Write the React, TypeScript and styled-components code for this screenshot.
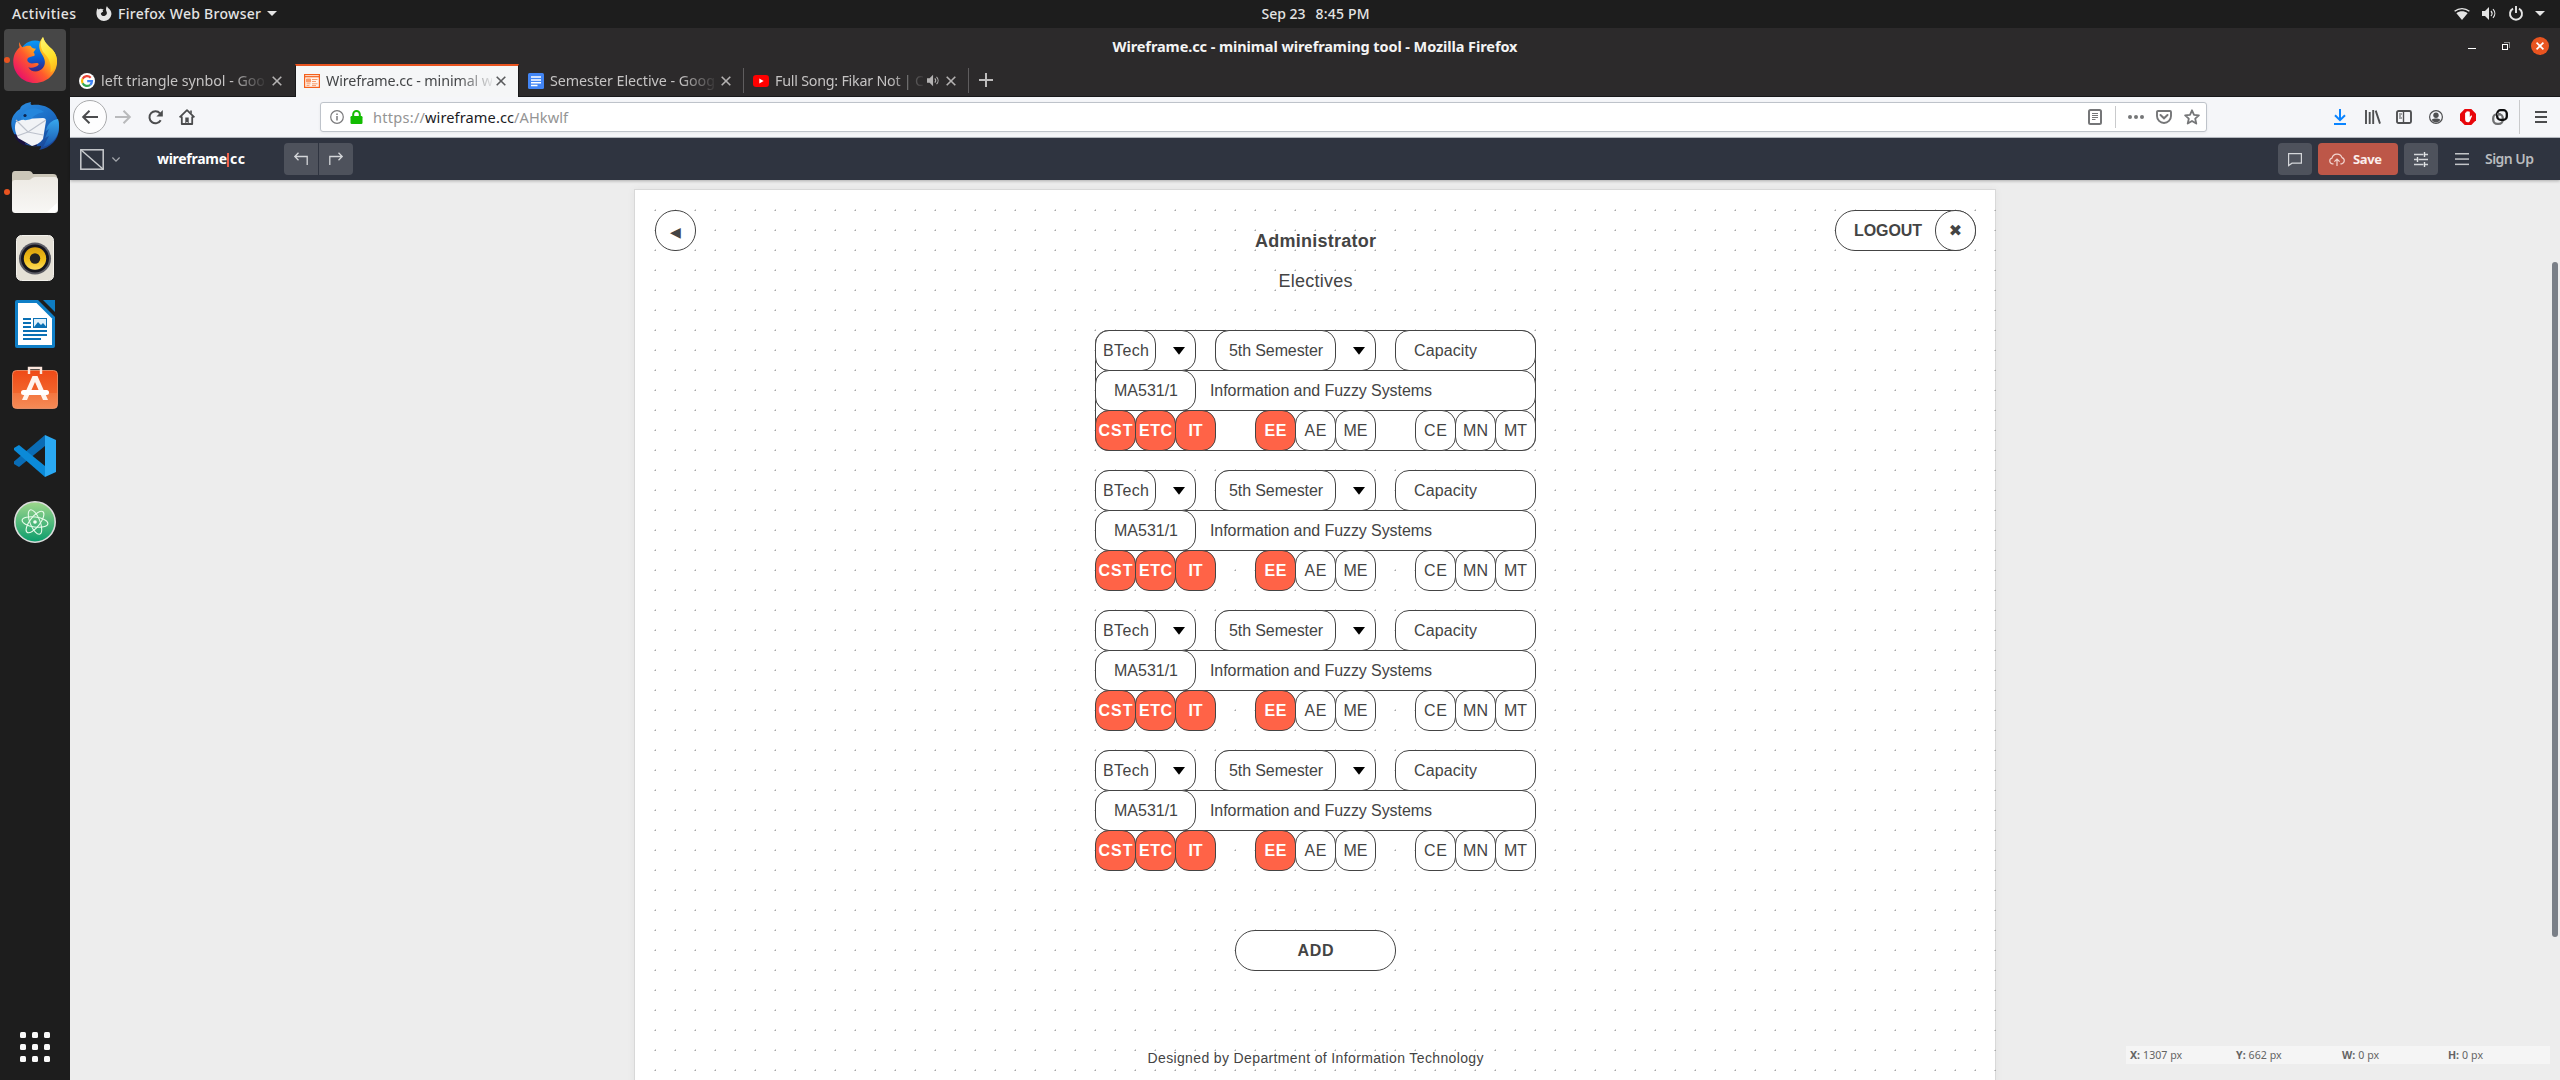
import React, { useLayoutEffect, useRef, useState } from "react";
import styled, { createGlobalStyle, css } from "styled-components";

const UI_FONT = '"Noto Sans", "Open Sans", sans-serif';
const WIRE_FONT = '"Liberation Sans", Arial, sans-serif';
const INK = "#444444";

const GlobalStyle = createGlobalStyle`
  *, *::before, *::after { box-sizing: border-box; }
  html, body { margin: 0; padding: 0; overflow: hidden; background: #1d1d1d; }
  svg { display: block; flex: none; overflow: visible; }
`;

/* ---------- text that tracks itself to a given width ---------- */

const Tracked = styled.span`
  display: inline-block;
  white-space: pre;
  flex: none;
`;

function FitText({ width, children }: { width: number; children: string }) {
  const ref = useRef<HTMLSpanElement>(null);
  const [spacing, setSpacing] = useState(0);
  useLayoutEffect(() => {
    const el = ref.current;
    if (!el) return;
    el.style.letterSpacing = "0px";
    const natural = el.getBoundingClientRect().width;
    const next = (width + 1 - natural) / Math.max(1, children.length - 1);
    el.style.letterSpacing = `${next}px`;
    setSpacing(next);
  }, [width, children]);
  return (
    <Tracked ref={ref} style={{ letterSpacing: spacing, marginRight: -spacing }}>
      {children}
    </Tracked>
  );
}

/* ---------- desktop shell ---------- */

const Desktop = styled.div`
  width: 2560px;
  height: 1080px;
  overflow: hidden;
  display: flex;
  flex-direction: column;
  background: #1d1d1d;
  font-family: ${UI_FONT};
`;

const TopBar = styled.header`
  height: 28px;
  flex: none;
  display: grid;
  grid-template-columns: 1fr auto 1fr;
  align-items: center;
  padding: 0 15px 1px 12px;
  color: #e4e4e4;
  font-size: 14px;
  font-weight: 500;
  line-height: 20px;
`;

const TopGroup = styled.div<{ $gap: number; $end?: boolean }>`
  display: flex;
  align-items: center;
  gap: ${(p) => p.$gap}px;
  justify-content: ${(p) => (p.$end ? "flex-end" : "flex-start")};
`;

const Clock = styled.div`
  display: flex;
  gap: 10px;
  padding-left: 74px;
`;

const AppMenu = styled.div`
  display: flex;
  align-items: center;
  gap: 6px;
  margin-left: 20px;
`;

const Body = styled.div`
  flex: 1;
  display: flex;
  min-height: 0;
`;

const Dock = styled.nav`
  width: 70px;
  flex: none;
  display: flex;
  flex-direction: column;
  justify-content: space-between;
  padding: 1px 4px 18px;
`;

const DockList = styled.div`
  display: flex;
  flex-direction: column;
  gap: 4px;
`;

const DockTile = styled.div<{ $active?: boolean; $running?: boolean }>`
  position: relative;
  height: 62px;
  border-radius: 4px;
  display: flex;
  align-items: center;
  justify-content: center;
  background: ${(p) => (p.$active ? "#474747" : "transparent")};
  ${(p) =>
    p.$running &&
    css`
      &::before {
        content: "";
        position: absolute;
        left: 0;
        top: 28px;
        width: 6px;
        height: 6px;
        border-radius: 3px;
        background: #e95420;
      }
    `}
`;

const AppsGrid = styled.div`
  display: grid;
  grid-template-columns: repeat(3, 6px);
  gap: 6px;
  padding-left: 16px;
`;

const AppsDot = styled.i`
  width: 6px;
  height: 6px;
  border-radius: 1.5px;
  background: #fafafa;
`;

/* ---------- browser window ---------- */

const Window = styled.main`
  position: relative;
  flex: 1;
  min-width: 0;
  display: flex;
  flex-direction: column;
  background: #2c2a2b;
`;

const TitleBar = styled.div`
  height: 36px;
  flex: none;
  display: grid;
  grid-template-columns: 1fr auto 1fr;
  align-items: center;
  padding: 0 11px;
  color: #f4f4f4;
  font-size: 14.5px;
  font-weight: 700;
  line-height: 20px;
`;

const WindowButtons = styled.div`
  display: flex;
  align-items: center;
  justify-content: flex-end;
`;

const Minimise = styled.i`
  width: 8px;
  height: 1px;
  background: #fff;
  margin: 4px 26px 0 0;
`;

const Restore = styled.i`
  position: relative;
  width: 6px;
  height: 6px;
  border: 1px solid #fff;
  margin: 2px 23px 0 0;
  &::after {
    content: "";
    position: absolute;
    left: 1px;
    top: -3px;
    width: 6px;
    height: 6px;
    border: solid #8d8d8d;
    border-width: 1px 1px 0 0;
  }
`;

const CloseButton = styled.i`
  width: 18px;
  height: 18px;
  border-radius: 9px;
  background: #e95420;
  display: flex;
  align-items: center;
  justify-content: center;
`;

const TabStrip = styled.div`
  height: 33px;
  flex: none;
  display: flex;
  align-items: stretch;
  border-bottom: 1px solid #18181a;
`;

const Tab = styled.div<{ $active?: boolean; $rule?: boolean }>`
  width: 225px;
  flex: none;
  position: relative;
  display: flex;
  align-items: center;
  padding: 1px 13px 0 9px;
  color: #c5c3c3;
  font-size: 14.3px;
  line-height: 20px;
  ${(p) =>
    p.$active &&
    css`
      width: 224px;
      margin-bottom: -1px;
      padding: 0 12px 1px 8px;
      background: #f5f6f7;
      color: #444648;
      border-top: 2px solid #e95420;
      border-left: 1px solid #18181a;
      border-right: 1px solid #18181a;
    `}
  ${(p) =>
    p.$rule &&
    css`
      &::after {
        content: "";
        position: absolute;
        right: 0;
        top: 4px;
        bottom: 3px;
        width: 1px;
        background: #5f5d5e;
      }
    `}
`;

const TabLabel = styled.div<{ $width: number }>`
  width: ${(p) => p.$width}px;
  margin-left: 6px;
  overflow: hidden;
  white-space: nowrap;
  mask-image: linear-gradient(to right, #000 ${(p) => p.$width - 34}px, transparent ${(p) => p.$width + 4}px);
`;

const TabEnd = styled.div`
  margin-left: auto;
  display: flex;
  align-items: center;
  gap: 6px;
`;

const NewTab = styled.div`
  display: flex;
  align-items: center;
  padding-left: 10px;
`;

const NavBar = styled.div`
  height: 41px;
  flex: none;
  display: flex;
  align-items: center;
  background: #f5f6f9;
  border-bottom: 1px solid #bcc1c8;
  padding: 0 13px 0 3px;
`;

const BackButton = styled.div`
  width: 34px;
  height: 34px;
  border-radius: 17px;
  border: 1px solid #a9aaac;
  background: #fdfdfe;
  display: flex;
  align-items: center;
  justify-content: center;
`;

const NavIcon = styled.div<{ $before: number; $width: number }>`
  width: ${(p) => p.$width}px;
  margin-left: ${(p) => p.$before}px;
  display: flex;
  justify-content: center;
  flex: none;
`;

const UrlBar = styled.div`
  width: 1887px;
  height: 30px;
  margin-left: 125px;
  display: flex;
  align-items: center;
  background: #fff;
  border: 1px solid #bec3ca;
  border-radius: 3px;
  box-shadow: 0 1px 3px rgba(0, 0, 0, 0.06);
  padding: 0 6px 0 9px;
`;

const Url = styled.div`
  display: flex;
  margin-left: 10px;
  font-size: 14.6px;
  line-height: 20px;
  color: #949494;
`;

const UrlHost = styled.span`
  color: #1c1c1f;
`;

const Divider = styled.i<{ $height: number; $before: number }>`
  width: 1px;
  height: ${(p) => p.$height}px;
  margin-left: ${(p) => p.$before}px;
  background: #c9cacc;
`;

const Push = styled.div`
  flex: 1;
`;

/* ---------- wireframe editor ---------- */

const AppBar = styled.div`
  height: 42px;
  flex: none;
  display: flex;
  align-items: center;
  background: #2f3440;
  padding: 0 26px 0 10px;
  position: relative;
  box-shadow: 0 1px 3px rgba(0, 0, 0, 0.28);
`;

const Logo = styled.div`
  display: flex;
  align-items: center;
  width: 88px;
  margin-left: 37px;
  color: #fff;
  font-size: 14px;
  font-weight: 700;
  line-height: 20px;
`;

const LogoBar = styled.i`
  width: 2px;
  height: 14px;
  flex: none;
  background: #ee5f4b;
  margin: 2px 1px 0 0;
`;

const HistoryGroup = styled.div`
  display: flex;
  gap: 1px;
  margin-left: 39px;
  border-radius: 4px;
  overflow: hidden;
`;

const HistoryButton = styled.div`
  width: 34px;
  height: 32px;
  background: #4e525c;
  display: flex;
  align-items: center;
  justify-content: center;
`;

const ToolButton = styled.div<{ $width: number; $primary?: boolean }>`
  width: ${(p) => p.$width}px;
  height: 32px;
  border-radius: 4px;
  margin-right: 6px;
  display: flex;
  align-items: center;
  justify-content: center;
  gap: 8px;
  padding-right: ${(p) => (p.$primary ? 5 : 0)}px;
  background: ${(p) => (p.$primary ? "#bd5748" : "#4e525c")};
  color: #fbeeec;
  font-size: 13px;
  font-weight: 700;
  line-height: 20px;
`;

const SignUp = styled.div`
  margin-left: 16px;
  color: #b9bbbe;
  font-size: 14px;
  font-weight: 600;
  line-height: 20px;
`;

const Workspace = styled.div`
  flex: 1;
  min-height: 0;
  overflow: hidden;
  background: #ededed;
  display: flex;
  justify-content: center;
  padding: 9px 0 0;
`;

const Artboard = styled.div`
  width: 1362px;
  height: 1200px;
  flex: none;
  background: #fff;
  border: 1px solid #d8d8d8;
  box-shadow: 0 0 8px rgba(0, 0, 0, 0.05);
`;

const dotTile = encodeURIComponent(
  '<svg xmlns="http://www.w3.org/2000/svg" width="20" height="20" shape-rendering="crispEdges"><rect x="1" y="1" width="1" height="1" fill="#a8a8a8"/><rect x="0" y="1" width="1" height="1" fill="#cfcfcf"/><rect x="1" y="0" width="1" height="1" fill="#d2d2d2"/></svg>'
);

const DotGrid = styled.div`
  margin: 19px -1px 0 19px;
  height: 1180px;
  padding: 1px 20px 0 1px;
  background-image: url("data:image/svg+xml,${dotTile}");
  display: flex;
  flex-direction: column;
  align-items: center;
  color: ${INK};
  font-family: ${WIRE_FONT};
  font-size: 16px;
`;

const WireHeader = styled.div`
  align-self: stretch;
  display: grid;
  grid-template-columns: 1fr auto 1fr;
  align-items: start;
`;

const Titles = styled.div`
  padding-top: 11px;
  text-align: center;
  font-size: 18px;
  line-height: 40px;
`;

const TitleLine = styled.div<{ $bold?: boolean }>`
  font-weight: ${(p) => (p.$bold ? 700 : 400)};
`;

const Box = styled.div<{
  $width: number;
  $radius?: number;
  $fill?: string;
  $bold?: boolean;
  $start?: number;
}>`
  width: ${(p) => p.$width}px;
  height: 41px;
  flex: none;
  display: flex;
  align-items: center;
  justify-content: ${(p) => (p.$start !== undefined ? "flex-start" : "center")};
  padding-left: ${(p) => p.$start ?? 0}px;
  border: 1px solid ${INK};
  border-radius: ${(p) => p.$radius ?? 14}px;
  background: ${(p) => p.$fill ?? "#fff"};
  color: ${(p) => (p.$fill ? "#fff" : INK)};
  font-weight: ${(p) => (p.$bold ? 700 : 400)};
`;

const Inset = styled(Box)`
  margin: -1px 0 -1px -1px;
`;

const LogoutBox = styled(Box)`
  justify-self: end;
  justify-content: space-between;
`;

const LogoutClose = styled(Box)`
  margin: -1px -1px -1px 0;
  font-family: "DejaVu Sans", sans-serif;
  font-size: 16px;
`;

const BackBox = styled(Box)`
  font-family: "DejaVu Sans", sans-serif;
  font-size: 14px;
  padding-top: 2px;
`;

const CardList = styled.div`
  display: flex;
  flex-direction: column;
  gap: 19px;
  margin-top: 29px;
`;

const Card = styled.section<{ $outlined?: boolean }>`
  width: 441px;
  height: 121px;
  border-radius: 14px;
  display: flex;
  flex-direction: column;
  ${(p) =>
    p.$outlined &&
    css`
      background: #fff;
      box-shadow: inset 0 0 0 1px ${INK};
    `}
`;

const CardRow = styled.div`
  display: flex;
  justify-content: space-between;
  & + & {
    margin-top: -1px;
  }
`;

const BranchGroup = styled.div`
  display: flex;
  & > * + * {
    margin-left: -1px;
  }
`;

const ArrowCell = styled.div<{ $before: number }>`
  margin-left: ${(p) => p.$before}px;
  padding-top: 1px;
`;

const CourseName = styled.div`
  margin-left: 14px;
`;

const AddBox = styled(Box)`
  margin-top: 59px;
`;

const Footer = styled.div`
  margin-top: 77px;
  font-size: 14px;
  line-height: 20px;
`;

const ScrollThumb = styled.i`
  position: absolute;
  right: 2px;
  top: 234px;
  width: 6px;
  height: 675px;
  border-radius: 3px;
  background: #7a7f87;
`;

const Readout = styled.div`
  position: absolute;
  right: 10px;
  bottom: 16px;
  width: 424px;
  height: 18px;
  display: grid;
  grid-template-columns: repeat(4, 106px);
  align-items: center;
  background: #f5f5f5;
  color: #646464;
  font-size: 10.6px;
  line-height: 18px;
`;

const ReadoutCell = styled.div`
  display: flex;
  gap: 3px;
  padding-left: 4px;
  b {
    font-weight: 700;
  }
`;

/* ---------- small icons ---------- */

const Caret = () => (
  <svg width="10" height="5" viewBox="0 0 10 5">
    <path d="M0 0h10L5 5z" fill="#e4e4e4" />
  </svg>
);

const FirefoxMono = () => (
  <svg width="16" height="16" viewBox="0 0 16 16">
    <path
      d="M1.4 2.2 2.6 3.6C4 2.6 5 2.6 6 3.2L7.6 3 6.6 4.8c.8.6.6 1.2-.6 1.4L4.8 7.4c.4 2 2 2.7 3.6 2.5C10.500 9.600 11.500 7.600 10.600 5.800 9.800 4.400 9.700 2 11 0c.3 1.400 1.500 2 2.600 3.200C15 4.800 15.600 6.600 15.400 8.600A7.500 7.500 0 0 1 .5 8.200C.3 6 .7 3.800 1.400 2.200z"
      fill="#e4e4e4"
    />
  </svg>
);

const WifiIcon = () => (
  <svg width="16" height="12" viewBox="0 0 16 12">
    <path d="M.6 3.300C5-.3 11-.3 15.400 3.300" fill="none" stroke="#e4e4e4" strokeWidth="1.400" />
    <path d="M2.400 5.200C5.800 2.600 10.200 2.600 13.600 5.200L8 12z" fill="#e4e4e4" />
  </svg>
);

const SoundIcon = ({ color = "#e4e4e4", size = 15 }: { color?: string; size?: number }) => (
  <svg width={size} height={size} viewBox="0 0 15 15">
    <path d="M0 5h3l4-4v13l-4-4H0z" fill={color} />
    <path d="M9 5c1.300 1.500 1.300 3.500 0 5M11 3.200c2.400 2.500 2.400 6.100 0 8.600" fill="none" stroke={color} strokeWidth="1.200" />
  </svg>
);

const PowerIcon = () => (
  <svg width="14" height="15" viewBox="0 0 14 15">
    <path d="M4 2.600a6 6 0 1 0 6 0M7 0v7" fill="none" stroke="#e4e4e4" strokeWidth="1.900" />
  </svg>
);

const Cross = ({ size, color, weight = 1.6 }: { size: number; color: string; weight?: number }) => (
  <svg width={size} height={size} viewBox="0 0 10 10">
    <path d="M.7.7l8.600 8.600M9.300.7L.7 9.300" stroke={color} strokeWidth={weight} fill="none" />
  </svg>
);

const GoogleIcon = () => (
  <svg width="16" height="16" viewBox="0 0 16 16">
    <circle cx="8" cy="8" r="8" fill="#fff" />
    <g fill="none" strokeWidth="2.200">
      <path d="M11.700 4.700A5 5 0 0 0 3.600 5.700" stroke="#ea4335" />
      <path d="M3.600 5.700a5 5 0 0 0 0 4.600" stroke="#fbbc05" />
      <path d="M3.600 10.300a5 5 0 0 0 7.600 1.500" stroke="#34a853" />
      <path d="M11.200 11.800A5 5 0 0 0 13 8.100H8.200" stroke="#4285f4" />
    </g>
  </svg>
);

const WireframeIcon = () => (
  <svg width="16" height="14" viewBox="0 0 16 14">
    <rect x=".6" y=".6" width="14.800" height="12.800" fill="#fff3ea" stroke="#f4601c" strokeWidth="1.200" />
    <path d="M.6 2.700h14.800" stroke="#f4601c" strokeWidth="1.200" />
    <path d="M2.500 5h4v3h-4zM8 5.500h5.500M8 7.500h4M2.500 9.800h4M8 9.800h5.500M2.500 11.600h3M8 11.600h4" stroke="#f79a6a" fill="#f79a6a" />
  </svg>
);

const DocsIcon = () => (
  <svg width="16" height="16" viewBox="0 0 16 16">
    <rect width="16" height="16" rx="1.500" fill="#4285f4" />
    <path d="M3 4h10M3 7h10M3 9.800h10M3 12.500h6.500" stroke="#fff" strokeWidth="1.500" />
  </svg>
);

const YoutubeIcon = () => (
  <svg width="16" height="12" viewBox="0 0 16 12">
    <rect width="16" height="12" rx="3.200" fill="#f00" />
    <path d="M6.300 3.500v5l4.300-2.500z" fill="#fff" />
  </svg>
);

const PlusIcon = () => (
  <svg width="14" height="14" viewBox="0 0 14 14">
    <path d="M7 0v14M0 7h14" stroke="#bdbcbc" strokeWidth="2" />
  </svg>
);

const ArrowIcon = ({ color, flip }: { color: string; flip?: boolean }) => (
  <svg width="16" height="14" viewBox="0 0 16 14">
    <path
      d={flip ? "M0 7h15M8.500.8L14.800 7l-6.300 6.200" : "M16 7H1M7.500.8L1.200 7l6.300 6.200"}
      fill="none"
      stroke={color}
      strokeWidth="2"
    />
  </svg>
);

const ReloadIcon = () => (
  <svg width="15" height="15" viewBox="0 0 15 15">
    <path d="M12.700 10.200A6 6 0 1 1 12 3.300" fill="none" stroke="#4b4c4e" strokeWidth="2" />
    <path d="M14.800 0v6.400H8.400z" fill="#4b4c4e" />
  </svg>
);

const HomeIcon = () => (
  <svg width="16" height="16" viewBox="0 0 16 16">
    <path d="M.6 8.400L8 1.200l7.400 7.200M2.800 7.400V15h10.400V7.400" fill="none" stroke="#4b4c4e" strokeWidth="1.800" strokeLinejoin="round" />
    <path d="M6.300 8.500h3.400V15H8.700v-2H7.300v2h-1z" fill="#4b4c4e" />
    <path d="M11.200 1.500h1.600v3.200l-1.600-1.400z" fill="#4b4c4e" />
  </svg>
);

const InfoIcon = () => (
  <svg width="14" height="14" viewBox="0 0 14 14">
    <circle cx="7" cy="7" r="6.300" fill="none" stroke="#7a7a7c" strokeWidth="1.200" />
    <path d="M7 6v4.500M7 3.400v1.500" stroke="#7a7a7c" strokeWidth="1.500" />
  </svg>
);

const LockIcon = () => (
  <svg width="13" height="14" viewBox="0 0 13 14">
    <path d="M3.200 7V4.200a3.300 3.300 0 0 1 6.600 0V7" fill="none" stroke="#12bc00" strokeWidth="2" />
    <rect x=".5" y="6" width="12" height="8" rx="1.200" fill="#12bc00" />
  </svg>
);

const ReaderIcon = () => (
  <svg width="14" height="16" viewBox="0 0 14 16">
    <rect x="1" y="1" width="12" height="14" rx="1.500" fill="none" stroke="#757678" strokeWidth="2" />
    <path d="M4 4.500h6M4 6.500h6M4 8.500h6M4 10.500h3.500" stroke="#757678" />
  </svg>
);

const DotsIcon = () => (
  <svg width="16" height="4" viewBox="0 0 16 4">
    <circle cx="2" cy="2" r="2" fill="#757678" />
    <circle cx="8" cy="2" r="2" fill="#757678" />
    <circle cx="14" cy="2" r="2" fill="#757678" />
  </svg>
);

const PocketIcon = () => (
  <svg width="16" height="14" viewBox="0 0 16 14">
    <path d="M2 1h12a1 1 0 0 1 1 1v4a7 7 0 0 1-14 0V2a1 1 0 0 1 1-1z" fill="none" stroke="#757678" strokeWidth="1.900" />
    <path d="M4.500 5L8 8.300 11.500 5" fill="none" stroke="#757678" strokeWidth="2" strokeLinecap="round" />
  </svg>
);

const StarIcon = () => (
  <svg width="16" height="16" viewBox="0 0 16 16">
    <path d="M8 1.300l2 4.600 4.900.5-3.700 3.300 1.100 4.900L8 12l-4.300 2.600 1.100-4.900L1.100 6.400 6 5.900z" fill="none" stroke="#757678" strokeWidth="1.800" strokeLinejoin="round" />
  </svg>
);

const DownloadIcon = () => (
  <svg width="12" height="16" viewBox="0 0 12 16">
    <path d="M6 0v11M1 6.200l5 5 5-5M0 15h12" fill="none" stroke="#0a84ff" strokeWidth="2" />
  </svg>
);

const LibraryIcon = () => (
  <svg width="16" height="14" viewBox="0 0 16 14">
    <path d="M1 0v14M4.700 2v12M8.200 0v14M10.700.6l4.300 13" stroke="#4f5052" strokeWidth="1.900" />
  </svg>
);

const SidebarIcon = () => (
  <svg width="16" height="14" viewBox="0 0 16 14">
    <rect x="1" y="1" width="14" height="12" rx="1.500" fill="none" stroke="#4f5052" strokeWidth="1.900" />
    <path d="M7.500 1v12" stroke="#4f5052" strokeWidth="1.400" />
    <path d="M3 4h3M3 6h2M3 8h3" stroke="#4f5052" />
  </svg>
);

const AccountIcon = () => (
  <svg width="14" height="14" viewBox="0 0 14 14">
    <circle cx="7" cy="7" r="6.400" fill="none" stroke="#4f5052" strokeWidth="1.200" />
    <circle cx="7" cy="5.300" r="2.700" fill="#4f5052" />
    <path d="M2.600 10c1.400-1.400 2.800-1.400 4.400-1.400s3 0 4.400 1.400A5.300 5.300 0 0 1 7 12.400 5.300 5.300 0 0 1 2.600 10z" fill="#4f5052" />
  </svg>
);

const BlockIcon = () => (
  <svg width="16" height="16" viewBox="0 0 16 16">
    <path d="M4.700 0h6.600L16 4.700v6.600L11.300 16H4.700L0 11.300V4.700z" fill="#e8060b" />
    <path d="M5.100 8.500V4.200c0-.8 1-.8 1 0V3c0-.8 1.200-.8 1.200 0v-.5c0-.8 1.300-.8 1.300 0V3c0-.8 1.200-.8 1.200 0v5l1-1.300c.6-.6 1.500-.2 1.200.5L10.300 11c-.6 1.700-1 2.300-2.400 2.300-1.900 0-2.800-1.300-2.800-3.300z" fill="#fff" />
  </svg>
);

const ChainIcon = () => (
  <svg width="16" height="16" viewBox="0 0 16 16">
    <rect x="1.200" y="5.200" width="9.600" height="9.600" rx="4" fill="none" stroke="#6f7072" strokeWidth="2.300" />
    <rect x="5.200" y="1.200" width="9.600" height="9.600" rx="3.400" fill="none" stroke="#0c0c0d" strokeWidth="2.300" />
    <path d="M5 5.200h3.500" stroke="#6f7072" strokeWidth="2.300" />
  </svg>
);

const Burger = ({ width, color, weight, step }: { width: number; color: string; weight: number; step: number }) => (
  <svg width={width} height={step * 2 + weight} viewBox={`0 0 ${width} ${step * 2 + weight}`}>
    {[0, 1, 2].map((i) => (
      <rect key={i} y={i * step} width={width} height={weight} fill={color} />
    ))}
  </svg>
);

const StencilIcon = () => (
  <svg width="24" height="21" viewBox="0 0 24 21">
    <rect x=".8" y=".8" width="22.400" height="19.400" fill="none" stroke="#c9cbce" strokeWidth="1.500" />
    <path d="M.8.8l22.400 19.400" stroke="#c9cbce" strokeWidth="1.500" />
  </svg>
);

const ChevronIcon = () => (
  <svg width="8" height="5" viewBox="0 0 8 5">
    <path d="M.4.5L4 4.200 7.600.5" fill="none" stroke="#a5a8ad" strokeWidth="1.200" />
  </svg>
);

const TurnIcon = ({ forward }: { forward?: boolean }) => (
  <svg width="14" height="14" viewBox="0 0 14 14">
    <g transform={forward ? "translate(14 0) scale(-1 1)" : undefined}>
      <path d="M4.500.8L.8 4.500l3.700 3.700M.8 4.500h12.400V13" fill="none" stroke="#d4d6d9" strokeWidth="1.300" />
    </g>
  </svg>
);

const CommentIcon = () => (
  <svg width="14" height="13" viewBox="0 0 14 13">
    <path d="M.6.6h12.800v9.600H4L.6 12.600z" fill="none" stroke="#d4d6d9" strokeWidth="1.200" />
  </svg>
);

const CloudIcon = () => (
  <svg width="16" height="13" viewBox="0 0 16 13">
    <path d="M4.500 10.800H3.300A2.900 2.900 0 0 1 3 5.100 5.200 5.200 0 0 1 13 4.600a3.200 3.200 0 0 1-.3 6.200h-1.300M8 13V6.300M5.400 8.700L8 6.100l2.600 2.600" fill="none" stroke="#f3d5d0" strokeWidth="1.200" />
  </svg>
);

const SlidersIcon = () => (
  <svg width="14" height="15" viewBox="0 0 14 15">
    <path d="M0 2.500h9.500M11 2.500h3M0 7.500h3M4.500 7.500H14M0 12.500h9.500M11 12.500h3" stroke="#d4d6d9" strokeWidth="1.300" fill="none" />
    <path d="M10.500 0v5M3.500 5v5M10.500 10v5" stroke="#e2e4e6" strokeWidth="1.400" fill="none" />
  </svg>
);

const DownTriangle = () => (
  <svg width="12" height="8" viewBox="0 0 12 8">
    <path d="M0 0h12L6 7.800z" fill="#000" />
  </svg>
);

/* ---------- dock icons ---------- */

const FirefoxLogo = () => (
  <svg width="44" height="46" viewBox="0 0 44 46">
    <defs>
      <linearGradient id="ffBody" x1="0.9" y1="0.1" x2="0.15" y2="0.85">
        <stop offset="0" stopColor="#fff14a" />
        <stop offset="0.35" stopColor="#ffb51c" />
        <stop offset="0.62" stopColor="#ff5a2c" />
        <stop offset="1" stopColor="#ec1565" />
      </linearGradient>
      <linearGradient id="ffGlobe" x1="0.4" y1="0" x2="0.5" y2="1">
        <stop offset="0" stopColor="#0a9af5" />
        <stop offset="0.6" stopColor="#0a5bd0" />
        <stop offset="1" stopColor="#3a2383" />
      </linearGradient>
      <linearGradient id="ffTail" x1="0.3" y1="0" x2="0.6" y2="1">
        <stop offset="0" stopColor="#fff36a" />
        <stop offset="0.6" stopColor="#ffe22a" />
        <stop offset="1" stopColor="#ffb81c" />
      </linearGradient>
    </defs>
    <circle cx="22" cy="19" r="15.500" fill="url(#ffGlobe)" />
    <path
      d="M6.500 5c-.6 2-.5 3.500.2 5.200C2.200 14 0 19.500.3 25.500.8 37 10.300 46 22 46s21.500-9 22-20.500c.2-5-1.200-9-4.200-12.500C36 9 31.500 6 30 0c-4.500 5-5 11-1.500 16.500C32.500 22.500 33 27 29.800 31c-4 5-12 4.400-14.500-.8 4 1.400 6.700.3 9.500-1.600 1.500-1 1-2.400-.8-2.500-3.800-.2-6.500 1.400-9-1.300-1-1.200-1-2.600.3-4 1.500-1 3.700-1.500 6-1.800.7-1.500.3-2.600-.8-3.400.7-1.200 1.300-2.600 2.500-3.800-2.800-.2-4.500-1-5.500-3-3-.4-5.800.2-8 1.500C8 9 7 7 6.500 5z"
      fill="url(#ffBody)"
    />
    <path d="M30 0c1.500 6 6 9 9.800 13 3 3.500 4.400 7.500 4.200 12.500-1 5-3.500 8-6.500 10 1-8-1-14-6-19C27.500 12.500 26.500 6 30 0z" fill="url(#ffTail)" />
  </svg>
);

const ThunderbirdLogo = () => (
  <svg width="48" height="48" viewBox="0 0 48 48">
    <defs>
      <linearGradient id="tbBird" x1="0.2" y1="0" x2="0.8" y2="1">
        <stop offset="0" stopColor="#2b8ce0" />
        <stop offset="0.5" stopColor="#1b6cc4" />
        <stop offset="1" stopColor="#1b3f8f" />
      </linearGradient>
      <linearGradient id="tbWing" x1="0" y1="0" x2="0" y2="1">
        <stop offset="0" stopColor="#37a8ee" />
        <stop offset="1" stopColor="#1956ad" />
      </linearGradient>
    </defs>
    <path d="M20 0c-1 2 0 3 1 3C36 1 48 10 48 26c0 12-9 20-20 22 1-1 2-2 2-4-9 1-19-1-24-8C-2 26-2 14 9 7c1-4 6-6 11-7z" fill="url(#tbBird)" />
    <path d="M3 32c2 6 6 10 12 12l-1-3c4 2 8 3 12 3l-2-8z" fill="#1a1240" />
    <path d="M5 20l8-3 19-1c2 0 3 1 3 3l-3 18c-3 4-7 6-11 7L7 36c-3-6-4-11-2-16z" fill="#f1f3f6" />
    <path d="M5 18l12 12 18-12M17 30l-11 4M17 30l15 3" fill="none" stroke="#bcc1cb" strokeWidth="1.200" />
    <path d="M10 17c2-11 14-14 23-7-6 1-9 3-13 7-3 1-7 2-10 0z" fill="#2486dc" />
    <path d="M47 17c-6 1-11 5-12 12l3-2-4 9 4-2-6 11c10-3 16-11 16-20 0-3 0-5-1-8z" fill="url(#tbWing)" />
    <circle cx="14" cy="13.500" r="1.600" fill="#0c2450" />
  </svg>
);

const FilesLogo = () => (
  <svg width="46" height="42" viewBox="0 0 46 42">
    <defs>
      <linearGradient id="filesFront" x1="0" y1="0" x2="0" y2="1">
        <stop offset="0" stopColor="#edeae4" />
        <stop offset="1" stopColor="#f8f7f5" />
      </linearGradient>
    </defs>
    <path d="M3 0h14c2 0 3 1 4 3h20c3 0 4 1.500 4 4v12H0V4c0-3 1-4 3-4z" fill="#cbc6b8" />
    <path d="M0 12c0-2 1-3 3-3h14c2 0 3-3 6-3h20c2 0 3 1 3 3v29c0 3-1 4-4 4H4c-3 0-4-1-4-4z" fill="url(#filesFront)" />
    <path d="M45 32v6c0 2-1 3-3 3h-7z" fill="#fff" />
  </svg>
);

const SpeakerLogo = () => (
  <svg width="38" height="46" viewBox="0 0 38 46">
    <defs>
      <linearGradient id="cone" x1="0" y1="0" x2="0" y2="1">
        <stop offset="0" stopColor="#d99f0c" />
        <stop offset="0.6" stopColor="#f3c11c" />
        <stop offset="1" stopColor="#fbdc60" />
      </linearGradient>
    </defs>
    <rect x=".5" y=".5" width="37" height="45" rx="5" fill="#e4e0d6" stroke="#f3f1ec" />
    <circle cx="19" cy="23.500" r="16" fill="#5b5b63" />
    <circle cx="19" cy="23.500" r="14" fill="#16161f" />
    <circle cx="19" cy="23.500" r="11.200" fill="url(#cone)" />
    <circle cx="19" cy="23.500" r="5.200" fill="#232323" />
  </svg>
);

const WriterLogo = () => (
  <svg width="40" height="48" viewBox="0 0 40 48">
    <path d="M2 0h21l17 17v29a2 2 0 0 1-2 2H2a2 2 0 0 1-2-2V2a2 2 0 0 1 2-2z" fill="#0f7fc7" />
    <path d="M3 3h18.500L37 18.500V45H3z" fill="#fff" />
    <path d="M28 0h12v12z" fill="#0e7cc2" />
    <path d="M8 19h8M8 23h8M8 27h8M8 31h24M8 35h24M8 39h18" stroke="#0a70b4" strokeWidth="2" />
    <rect x="18.500" y="18.500" width="13" height="9" fill="#dff0fb" stroke="#0a70b4" />
    <path d="M19 27l4-5 3 3 2-2 3.500 4z" fill="#0a70b4" />
  </svg>
);

const SoftwareLogo = () => (
  <svg width="46" height="46" viewBox="0 0 46 46">
    <defs>
      <linearGradient id="bag" x1="0" y1="0" x2="0" y2="1">
        <stop offset="0" stopColor="#ef4a17" />
        <stop offset="0.58" stopColor="#f2652c" />
        <stop offset="0.6" stopColor="#f3763f" />
        <stop offset="1" stopColor="#f58b57" />
      </linearGradient>
    </defs>
    <rect x=".5" y="3.500" width="45" height="38" rx="4" fill="url(#bag)" stroke="#f79a70" strokeWidth=".8" />
    <path d="M17 7V1h12v6" fill="none" stroke="#fbe6dc" strokeWidth="2.400" />
    <path d="M20.500 9h5L36 33h-5L23 15l-8 18h-5z" fill="#fff3ec" />
    <rect x="9" y="23" width="28" height="5" rx="2.500" fill="#fff" />
  </svg>
);

const CodeLogo = () => (
  <svg width="42" height="42" viewBox="0 0 42 42">
    <path d="M0 26.500L31 0v11L5 32 0 29z" fill="#0a6cb5" />
    <path d="M5 10L31 31v11L0 15v-2z" fill="#0b8ad8" />
    <path d="M31 0l11 5v32l-11 5z" fill="#2aa9f3" />
  </svg>
);

const AtomLogo = () => (
  <svg width="42" height="42" viewBox="0 0 42 42">
    <defs>
      <linearGradient id="atomDisc" x1="0" y1="0" x2="0" y2="1">
        <stop offset="0" stopColor="#9fd78c" />
        <stop offset="1" stopColor="#0a9d6c" />
      </linearGradient>
    </defs>
    <circle cx="21" cy="21" r="20.200" fill="url(#atomDisc)" stroke="#dcdcdc" strokeWidth="1.600" />
    <g fill="none" stroke="#e6fbe9" strokeWidth="1.100">
      <ellipse cx="21" cy="21" rx="13" ry="5" transform="rotate(8 21 21)" />
      <ellipse cx="21" cy="21" rx="13" ry="5" transform="rotate(68 21 21)" />
      <ellipse cx="21" cy="21" rx="13" ry="5" transform="rotate(128 21 21)" />
    </g>
    <circle cx="21" cy="21" r="1.800" fill="#f2fff4" />
  </svg>
);

/* ---------- data ---------- */

const dockApps = [
  { id: "firefox", Icon: FirefoxLogo, active: true, running: true },
  { id: "thunderbird", Icon: ThunderbirdLogo },
  { id: "files", Icon: FilesLogo, running: true },
  { id: "rhythmbox", Icon: SpeakerLogo },
  { id: "writer", Icon: WriterLogo },
  { id: "software", Icon: SoftwareLogo },
  { id: "code", Icon: CodeLogo },
  { id: "atom", Icon: AtomLogo },
];

const tabs = [
  { Icon: GoogleIcon, title: "left triangle synbol - Goo", width: 163 },
  { Icon: WireframeIcon, title: "Wireframe.cc - minimal w", width: 166, active: true },
  { Icon: DocsIcon, title: "Semester Elective - Goog", width: 164, rule: true },
  { Icon: YoutubeIcon, title: "Full Song: Fikar Not | C", width: 148, rule: true, audible: true },
];

type Branch = { code: string; width: number; selected?: boolean };

const branchGroups: Branch[][] = [
  [
    { code: "CST", width: 33, selected: true },
    { code: "ETC", width: 32, selected: true },
    { code: "IT", width: 13, selected: true },
  ],
  [
    { code: "EE", width: 21, selected: true },
    { code: "AE", width: 21 },
    { code: "ME", width: 23 },
  ],
  [
    { code: "CE", width: 22 },
    { code: "MN", width: 24 },
    { code: "MT", width: 22 },
  ],
];

const readout = [
  { axis: "X:", value: "1307 px", width: 38 },
  { axis: "Y:", value: "662 px", width: 32 },
  { axis: "W:", value: "0 px", width: 20 },
  { axis: "H:", value: "0 px", width: 20 },
];

/* ---------- composed parts ---------- */

function ElectiveCard({ outlined }: { outlined?: boolean }) {
  return (
    <Card $outlined={outlined}>
      <CardRow>
        <Box $width={101} $start={0}>
          <Inset $width={61} $start={7}>
            <FitText width={45}>BTech</FitText>
          </Inset>
          <ArrowCell $before={17}>
            <DownTriangle />
          </ArrowCell>
        </Box>
        <Box $width={161} $start={0}>
          <Inset $width={121} $start={13}>
            <FitText width={93}>5th Semester</FitText>
          </Inset>
          <ArrowCell $before={17}>
            <DownTriangle />
          </ArrowCell>
        </Box>
        <Box $width={141} $start={18}>
          <FitText width={62}>Capacity</FitText>
        </Box>
      </CardRow>
      <CardRow>
        <Box $width={441} $start={0}>
          <Inset $width={101} $start={18}>
            <FitText width={63}>MA531/1</FitText>
          </Inset>
          <CourseName>
            <FitText width={221}>Information and Fuzzy Systems</FitText>
          </CourseName>
        </Box>
      </CardRow>
      <CardRow>
        {branchGroups.map((group, i) => (
          <BranchGroup key={i}>
            {group.map((b) => (
              <Box key={b.code} $width={41} $fill={b.selected ? "#ff6347" : undefined} $bold={b.selected}>
                <FitText width={b.width}>{b.code}</FitText>
              </Box>
            ))}
          </BranchGroup>
        ))}
      </CardRow>
    </Card>
  );
}

function Wireframe() {
  return (
    <Workspace>
      <Artboard>
        <DotGrid>
          <WireHeader>
            <BackBox $width={41} $radius={20}>
              ◀
            </BackBox>
            <Titles>
              <TitleLine $bold>
                <FitText width={120}>Administrator</FitText>
              </TitleLine>
              <TitleLine>
                <FitText width={73}>Electives</FitText>
              </TitleLine>
            </Titles>
            <LogoutBox $width={141} $radius={20} $start={18} $bold>
              <FitText width={67}>LOGOUT</FitText>
              <LogoutClose $width={41} $radius={20}>
                ✖
              </LogoutClose>
            </LogoutBox>
          </WireHeader>
          <CardList>
            {[0, 1, 2, 3].map((i) => (
              <ElectiveCard key={i} outlined={i === 0} />
            ))}
          </CardList>
          <AddBox $width={161} $radius={20} $bold>
            <FitText width={35}>ADD</FitText>
          </AddBox>
          <Footer>
            <FitText width={335}>Designed by Department of Information Technology</FitText>
          </Footer>
        </DotGrid>
      </Artboard>
    </Workspace>
  );
}

export default function App() {
  return (
    <>
      <GlobalStyle />
      <Desktop>
        <TopBar>
          <TopGroup $gap={0}>
            <FitText width={63}>Activities</FitText>
            <AppMenu>
              <FirefoxMono />
              <FitText width={142}>Firefox Web Browser</FitText>
              <Caret />
            </AppMenu>
          </TopGroup>
          <Clock>
            <FitText width={43}>Sep 23</FitText>
            <FitText width={53}>8:45 PM</FitText>
          </Clock>
          <TopGroup $gap={12} $end>
            <WifiIcon />
            <SoundIcon />
            <PowerIcon />
            <Caret />
          </TopGroup>
        </TopBar>
        <Body>
          <Dock>
            <DockList>
              {dockApps.map(({ id, Icon, active, running }) => (
                <DockTile key={id} $active={active} $running={running}>
                  <Icon />
                </DockTile>
              ))}
            </DockList>
            <AppsGrid>
              {Array.from({ length: 9 }, (_, i) => (
                <AppsDot key={i} />
              ))}
            </AppsGrid>
          </Dock>
          <Window>
            <TitleBar>
              <span />
              <FitText width={404}>Wireframe.cc - minimal wireframing tool - Mozilla Firefox</FitText>
              <WindowButtons>
                <Minimise />
                <Restore />
                <CloseButton>
                  <Cross size={8} color="#fff" weight={2} />
                </CloseButton>
              </WindowButtons>
            </TitleBar>
            <TabStrip>
              {tabs.map(({ Icon, title, width, active, rule, audible }) => (
                <Tab key={title} $active={active} $rule={rule}>
                  <Icon />
                  <TabLabel $width={width}>
                    <FitText width={width}>{title}</FitText>
                  </TabLabel>
                  <TabEnd>
                    {audible && <SoundIcon color="#b4b2b2" size={13} />}
                    <Cross size={10} color={active ? "#5a5b5d" : "#b4b2b2"} />
                  </TabEnd>
                </Tab>
              ))}
              <NewTab>
                <PlusIcon />
              </NewTab>
            </TabStrip>
            <NavBar>
              <BackButton>
                <ArrowIcon color="#4b4c4e" />
              </BackButton>
              <NavIcon $before={8} $width={16}>
                <ArrowIcon color="#b9babc" flip />
              </NavIcon>
              <NavIcon $before={17} $width={15}>
                <ReloadIcon />
              </NavIcon>
              <NavIcon $before={16} $width={16}>
                <HomeIcon />
              </NavIcon>
              <UrlBar>
                <InfoIcon />
                <NavIcon $before={6} $width={13}>
                  <LockIcon />
                </NavIcon>
                <Url>
                  <FitText width={51}>https://</FitText>
                  <UrlHost>
                    <FitText width={88}>wireframe.cc</FitText>
                  </UrlHost>
                  <FitText width={53}>/AHkwlf</FitText>
                </Url>
                <Push />
                <ReaderIcon />
                <Divider $height={22} $before={13} />
                <NavIcon $before={12} $width={16}>
                  <DotsIcon />
                </NavIcon>
                <NavIcon $before={12} $width={16}>
                  <PocketIcon />
                </NavIcon>
                <NavIcon $before={12} $width={16}>
                  <StarIcon />
                </NavIcon>
              </UrlBar>
              <Push />
              <DownloadIcon />
              <NavIcon $before={19} $width={16}>
                <LibraryIcon />
              </NavIcon>
              <NavIcon $before={15} $width={16}>
                <SidebarIcon />
              </NavIcon>
              <NavIcon $before={16} $width={16}>
                <AccountIcon />
              </NavIcon>
              <NavIcon $before={16} $width={16}>
                <BlockIcon />
              </NavIcon>
              <NavIcon $before={16} $width={16}>
                <ChainIcon />
              </NavIcon>
              <Divider $height={34} $before={11} />
              <NavIcon $before={15} $width={12}>
                <Burger width={12} color="#4b4c4e" weight={2} step={5} />
              </NavIcon>
            </NavBar>
            <AppBar>
              <StencilIcon />
              <NavIcon $before={8} $width={8}>
                <ChevronIcon />
              </NavIcon>
              <Logo>
                <FitText width={69}>wireframe</FitText>
                <LogoBar />
                <FitText width={14}>cc</FitText>
              </Logo>
              <HistoryGroup>
                <HistoryButton>
                  <TurnIcon />
                </HistoryButton>
                <HistoryButton>
                  <TurnIcon forward />
                </HistoryButton>
              </HistoryGroup>
              <Push />
              <ToolButton $width={34}>
                <CommentIcon />
              </ToolButton>
              <ToolButton $width={80} $primary>
                <CloudIcon />
                <FitText width={28}>Save</FitText>
              </ToolButton>
              <ToolButton $width={34}>
                <SlidersIcon />
              </ToolButton>
              <NavIcon $before={11} $width={14}>
                <Burger width={14} color="#c3c5c8" weight={1.5} step={5.3} />
              </NavIcon>
              <SignUp>
                <FitText width={48}>Sign Up</FitText>
              </SignUp>
            </AppBar>
            <Wireframe />
            <ScrollThumb />
            <Readout>
              {readout.map((r) => (
                <ReadoutCell key={r.axis}>
                  <b>{r.axis}</b>
                  <FitText width={r.width}>{r.value}</FitText>
                </ReadoutCell>
              ))}
            </Readout>
          </Window>
        </Body>
      </Desktop>
    </>
  );
}
